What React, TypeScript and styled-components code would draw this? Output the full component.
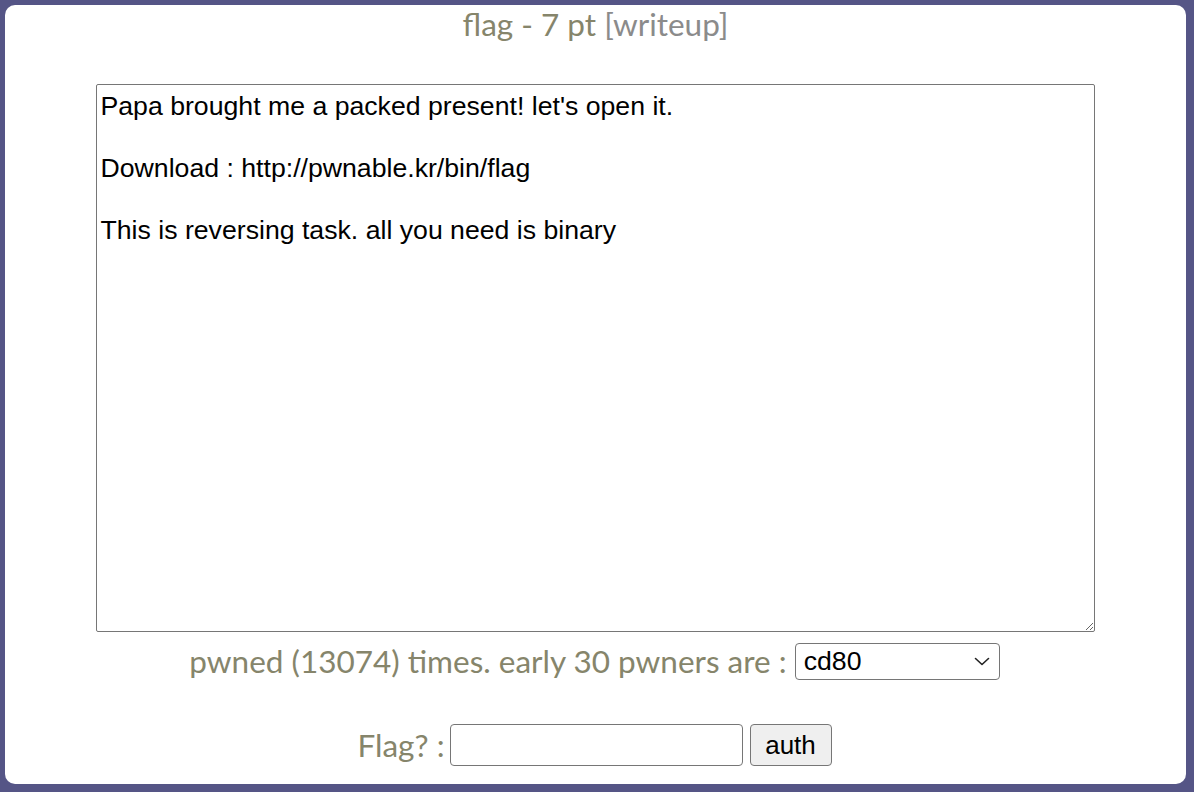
import React from "react";
import styled, { createGlobalStyle } from "styled-components";

const Global = createGlobalStyle`
  html, body { margin: 0; padding: 0; height: 100%; background: #555586; }
  #root { height: 100%; }
`;

const Frame = styled.div`
  box-sizing: border-box;
  width: 1194px;
  height: 792px;
  padding: 5px 8px 8px 5px;
  background: #555586;
`;

const Panel = styled.div`
  box-sizing: border-box;
  height: 100%;
  background: #ffffff;
  border-radius: 10px;
  display: flex;
  flex-direction: column;
  align-items: center;
  font-family: Lato, "Open Sans", sans-serif;
  color: #86856b;
`;

const Title = styled.div`
  font-size: 31.5px;
  line-height: normal;
`;

const Writeup = styled.span`
  color: #8b8b8b;
`;

const Description = styled.textarea`
  box-sizing: border-box;
  margin-top: 41px;
  margin-right: 1px;
  width: 999px;
  height: 548px;
  border: 1px solid #767676;
  border-radius: 2px;
  padding: 6px 4px 3px 4px;
  font-family: "Liberation Sans", Arial, sans-serif;
  font-size: 26.67px;
  line-height: normal;
  color: #000;
  resize: both;
  outline: none;
`;

const Row = styled.div<{ $top: number; $gap: number; $shift: number }>`
  display: flex;
  align-items: center;
  gap: ${(p) => p.$gap}px;
  margin-top: ${(p) => p.$top}px;
  margin-right: ${(p) => p.$shift}px;
  font-size: 31.5px;
  line-height: normal;
`;

const Label = styled.span<{ $tight?: boolean }>`
  margin-right: ${(p) => (p.$tight ? -2 : 0)}px;
`;

const SelectWrap = styled.div`
  position: relative;
  display: flex;
`;

const Select = styled.select`
  box-sizing: border-box;
  appearance: none;
  width: 205px;
  height: 37px;
  border: 1px solid #767676;
  border-radius: 4px;
  background: #fff;
  font-family: "Liberation Sans", Arial, sans-serif;
  font-size: 26.67px;
  color: #000;
  padding: 0 8px;
  outline: none;
`;

const Chevron = styled.svg`
  position: absolute;
  right: 10px;
  top: 14px;
  width: 16px;
  height: 9px;
  pointer-events: none;
`;

const Input = styled.input`
  box-sizing: border-box;
  width: 293px;
  height: 42px;
  border: 1px solid #767676;
  border-radius: 4px;
  font-family: "Liberation Sans", Arial, sans-serif;
  font-size: 26.67px;
  outline: none;
`;

const Button = styled.button`
  box-sizing: border-box;
  width: 82px;
  height: 42px;
  border: 1px solid #767676;
  border-radius: 4px;
  background: #efefef;
  font-family: "Liberation Sans", Arial, sans-serif;
  font-size: 26px;
  color: #000;
  padding: 0;
`;

const text = `Papa brought me a packed present! let's open it.

Download : http://pwnable.kr/bin/flag

This is reversing task. all you need is binary`;

export default function App() {
  return (
    <Frame>
      <Global />
      <Panel>
        <Title>
          flag - 7 pt <Writeup>[writeup]</Writeup>
        </Title>
        <Description readOnly defaultValue={text} />
        <Row $top={10} $gap={8} $shift={2}>
          <Label>pwned (13074) times. early 30 pwners are :</Label>
          <SelectWrap>
            <Select defaultValue="cd80">
              <option value="cd80">cd80</option>
            </Select>
            <Chevron viewBox="0 0 16 9">
              <path d="M1.5 1.5 L8 7.5 L14.5 1.5" fill="none" stroke="#222" strokeWidth="1.6" strokeLinecap="round" strokeLinejoin="round" />
            </Chevron>
          </SelectWrap>
        </Row>
        <Row $top={44} $gap={7} $shift={2}>
          <Label $tight>Flag? :</Label>
          <Input type="text" />
          <Button>auth</Button>
        </Row>
      </Panel>
    </Frame>
  );
}
